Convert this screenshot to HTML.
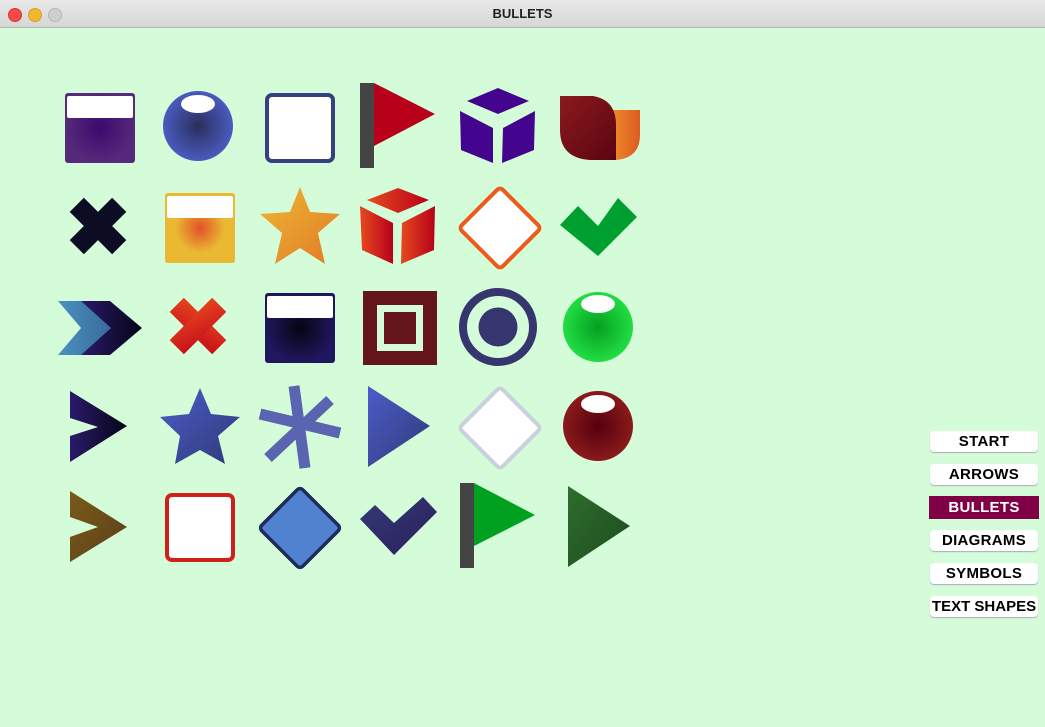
<!DOCTYPE html>
<html><head><meta charset="utf-8"><style>
html,body{margin:0;padding:0;width:1045px;height:727px;overflow:hidden;background:#d4fcd9;font-family:"Liberation Sans",sans-serif}
.tb{position:absolute;left:0;top:0;width:1045px;height:27px;background:linear-gradient(#e9e9e9,#d6d6d6);border-bottom:1px solid #b5b5b5;text-align:center;font-weight:bold;font-size:13px;line-height:27px;color:#222}
.dot{position:absolute;top:8px;width:12px;height:12px;border-radius:50%}
.btn{position:absolute;left:930px;width:108px;height:21px;background:#fff;border-radius:4px;box-shadow:0 1px 1px #aab;text-align:center;font-weight:bold;font-size:15px;letter-spacing:0.3px;line-height:21px;color:#000}
svg{position:absolute;left:0;top:0}
</style></head><body>
<div class="tb">BULLETS</div>
<div class="dot" style="left:8px;background:#ee4b4a;border:0.5px solid #d33"></div>
<div class="dot" style="left:28px;background:#f0b731;border:0.5px solid #d9a020"></div>
<div class="dot" style="left:48px;background:#cfcfcf;border:0.5px solid #b5b5b5"></div>
<svg width="1045" height="727" viewBox="0 0 1045 727">
<defs>
<radialGradient id="gp"><stop offset="0" stop-color="#3b0a6e"/><stop offset="1" stop-color="#57297a"/></radialGradient>
<radialGradient id="gb"><stop offset="0" stop-color="#2a2f5a"/><stop offset="1" stop-color="#4a5bc0"/></radialGradient>
<radialGradient id="gy"><stop offset="0" stop-color="#e2502a"/><stop offset="0.7" stop-color="#eab832"/></radialGradient>
<radialGradient id="gn"><stop offset="0" stop-color="#050510"/><stop offset="1" stop-color="#211660"/></radialGradient>
<radialGradient id="gg"><stop offset="0" stop-color="#05a020"/><stop offset="1" stop-color="#22dd44"/></radialGradient>
<radialGradient id="gr"><stop offset="0" stop-color="#550010"/><stop offset="1" stop-color="#8a1a1a"/></radialGradient>
<linearGradient id="go" x1="0" y1="0" x2="1" y2="1"><stop offset="0" stop-color="#eeb832"/><stop offset="1" stop-color="#e07a28"/></linearGradient>
<linearGradient id="gc" x1="0" y1="0" x2="1" y2="0"><stop offset="0" stop-color="#e54a1e"/><stop offset="1" stop-color="#b8001a"/></linearGradient>
<linearGradient id="gl" x1="0" y1="0" x2="1" y2="1"><stop offset="0" stop-color="#8b1a1c"/><stop offset="1" stop-color="#5a0512"/></linearGradient>
<linearGradient id="gor" x1="0" y1="0" x2="1" y2="0"><stop offset="0" stop-color="#ee8a2a"/><stop offset="1" stop-color="#dd5a22"/></linearGradient>
<linearGradient id="gx" x1="0" y1="0" x2="1" y2="1"><stop offset="0" stop-color="#e5441e"/><stop offset="1" stop-color="#c8101a"/></linearGradient>
<linearGradient id="gch" x1="0" y1="0" x2="1" y2="0"><stop offset="0" stop-color="#2a1a6a"/><stop offset="1" stop-color="#050515"/></linearGradient>
<linearGradient id="gbl" x1="0" y1="0" x2="1" y2="0"><stop offset="0" stop-color="#4a90c0"/><stop offset="1" stop-color="#3a6a9a"/></linearGradient>
<linearGradient id="gs" x1="0" y1="0" x2="1" y2="1"><stop offset="0" stop-color="#4c5cc8"/><stop offset="1" stop-color="#2f3a78"/></linearGradient>
<linearGradient id="gbr" x1="0" y1="0" x2="1" y2="1"><stop offset="0" stop-color="#7a5a1a"/><stop offset="1" stop-color="#5a4018"/></linearGradient>
<linearGradient id="gt" x1="0" y1="0" x2="1" y2="1"><stop offset="0" stop-color="#2e6e2e"/><stop offset="1" stop-color="#1e4a1e"/></linearGradient>
<linearGradient id="gk" x1="0" y1="0" x2="1" y2="1"><stop offset="0" stop-color="#343a78"/><stop offset="1" stop-color="#2a1e5a"/></linearGradient>
</defs>
<rect x="65" y="93" width="70" height="70" rx="3" fill="url(#gp)"/>
<rect x="67" y="96" width="66" height="22" rx="2" fill="#fff"/>
<ellipse cx="198" cy="126" rx="35" ry="35" fill="url(#gb)"/>
<ellipse cx="198" cy="104" rx="17" ry="9" fill="#fff"/>
<rect x="267" y="95" width="66" height="66" rx="5" fill="#fff" stroke="#34407f" stroke-width="4"/>
<rect x="360" y="83" width="14" height="85" fill="#444"/>
<polygon points="374,83 435,114 374,146" fill="#b8001a"/>
<g fill="#43048e">
<polygon points="467,101 498,88 529,101 498,114"/>
<polygon points="460,111 493,128 493,163 461,150"/>
<polygon points="503,128 535,111 534,150 502,163"/>
</g>
<path d="M612,110 L640,110 L640,135 Q640,158 616,160 Z" fill="url(#gor)"/>
<path d="M560,96 L593,96 Q616,100 616,125 L616,160 L590,160 Q560,158 560,130 Z" fill="url(#gl)"/>
<g transform="translate(98,226) rotate(45)"><rect x="-30" y="-10" width="60" height="20" fill="#0c0c22"/><rect x="-10" y="-30" width="20" height="60" fill="#0c0c22"/></g>
<rect x="165" y="193" width="70" height="70" rx="3" fill="url(#gy)"/>
<rect x="167" y="196" width="66" height="22" rx="2" fill="#fff"/>
<polygon points="300,187 310,212 340,214 318,233 325,264 300,248 275,264 282,233 260,214 290,212" fill="url(#go)"/>
<g fill="url(#gc)">
<polygon points="367,200 398,188 429,200 398,213"/>
<polygon points="360,206 393,223 393,264 362,250"/>
<polygon points="402,223 435,206 434,250 401,264"/>
</g>
<rect x="471" y="199" width="58" height="58" rx="4" transform="rotate(45 500 228)" fill="#fff" stroke="#ec5a1c" stroke-width="4"/>
<polygon points="560,225 578,206 598,226 618,198 637,217 598,256" fill="#00a030"/>
<polygon points="58,301 90,301 112,328 90,355 58,355 81,328" fill="url(#gbl)"/>
<polygon points="81,301 110,301 142,328 110,355 81,355 111,328" fill="url(#gch)"/>
<g transform="translate(198,326) rotate(45)"><rect x="-30" y="-10" width="60" height="20" fill="url(#gx)"/><rect x="-10" y="-30" width="20" height="60" fill="url(#gx)"/></g>
<rect x="265" y="293" width="70" height="70" rx="3" fill="url(#gn)"/>
<rect x="267" y="296" width="66" height="22" rx="2" fill="#fff"/>
<rect x="363" y="291" width="74" height="74" fill="#64161a"/>
<rect x="377" y="305" width="46" height="46" fill="#d4fcd9"/>
<rect x="384" y="312" width="32" height="32" fill="#64161a"/>
<circle cx="498" cy="327" r="35" fill="none" stroke="#35366e" stroke-width="8"/>
<circle cx="498" cy="327" r="19.5" fill="#35366e"/>
<ellipse cx="598" cy="327" rx="35" ry="35" fill="url(#gg)"/>
<ellipse cx="598" cy="304" rx="17" ry="9" fill="#fff"/>
<polygon points="70,391 127,426 70,462 70,436 98,427 70,418" fill="url(#gch)"/>
<polygon points="200,388 211,414 240,417 218,436 225,464 200,450 175,464 180,436 160,417 189,414" fill="url(#gs)"/>
<g stroke="#5a64b0" stroke-width="11"><line x1="294" y1="386" x2="305" y2="468"/><line x1="330" y1="400" x2="268" y2="458"/><line x1="260" y1="414" x2="340" y2="433"/></g>
<polygon points="368,386 430,426 368,467" fill="url(#gs)"/>
<rect x="471" y="399" width="58" height="58" rx="4" transform="rotate(45 500 428)" fill="#fff" stroke="#c9d1df" stroke-width="4"/>
<ellipse cx="598" cy="426" rx="35" ry="35" fill="url(#gr)"/>
<ellipse cx="598" cy="404" rx="17" ry="9" fill="#fff"/>
<polygon points="70,491 127,527 70,562 70,537 98,527 70,517" fill="url(#gbr)"/>
<rect x="167" y="495" width="66" height="65" rx="5" fill="#fff" stroke="#d0201a" stroke-width="4"/>
<rect x="271" y="499" width="58" height="58" rx="4" transform="rotate(45 300 528)" fill="#5082d0" stroke="#1e2a5a" stroke-width="3.5"/>
<polygon points="360,519 375,505 394,523 423,497 437,512 394,555" fill="url(#gk)"/>
<rect x="460" y="483" width="14" height="85" fill="#444"/>
<polygon points="474,483 535,515 474,546" fill="#00a020"/>
<polygon points="568,486 630,526 568,567" fill="url(#gt)"/>
</svg>
<div class="btn" style="top:431px">START</div>
<div class="btn" style="top:464px">ARROWS</div>
<div class="btn" style="top:496px;left:929px;width:110px;height:23px;line-height:23px;border-radius:0;background:#800045;color:#fff;box-shadow:none">BULLETS</div>
<div class="btn" style="top:530px">DIAGRAMS</div>
<div class="btn" style="top:563px">SYMBOLS</div>
<div class="btn" style="top:596px;letter-spacing:0">TEXT SHAPES</div>
</body></html>
